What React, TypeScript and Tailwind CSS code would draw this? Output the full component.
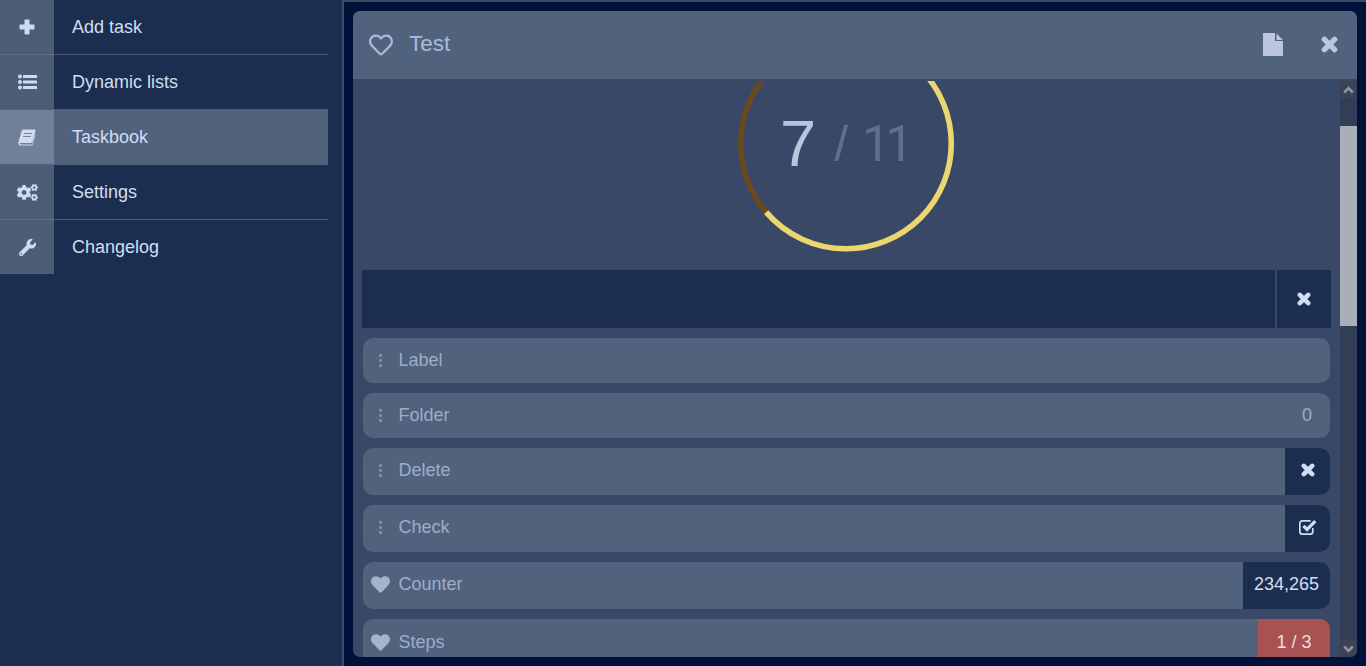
import { FaCogs, FaWrench, FaHeart, FaRegHeart } from "react-icons/fa";
import type { ReactNode } from "react";

function BookIcon() {
  return (
    <svg width="18" height="17" viewBox="0 0 18 17" fill="currentColor">
      <path fillRule="evenodd" d="M5.2 0.5H16.4C17.3 0.5 17.7 1.2 17.5 2L14.6 12.6C14.3 13.6 13.6 14 12.6 14H3C2.2 14 1.9 14.4 2 14.8C2.2 15.3 2.6 15.5 3.3 15.5H14.2L16.6 6.5L17.4 5.8L14.9 15.3C14.7 16.1 14 16.6 13.2 16.6H3C1.6 16.6 0.4 15.5 0.3 14.2C0.2 13.6 0.3 13.2 0.5 12.7L3.6 2C3.9 1 4.4 0.5 5.2 0.5ZM6.2 4L6 5H13.6L13.9 4ZM5.3 7L5 8H12.8L13.1 7Z" />
    </svg>
  );
}

function PlusIcon() {
  return (
    <svg width="16" height="16" viewBox="0 0 16 16" fill="currentColor">
      <rect x="5.5" y="0.5" width="5" height="15" rx="1" />
      <rect x="0.5" y="5.5" width="15" height="5" rx="1" />
    </svg>
  );
}

function ListIcon() {
  return (
    <svg width="19" height="16" viewBox="0 0 19 16" fill="currentColor">
      <circle cx="2" cy="2.5" r="2" />
      <circle cx="2" cy="8" r="2" />
      <circle cx="2" cy="13.5" r="2" />
      <rect x="5" y="1" width="14" height="3" rx="0.5" />
      <rect x="5" y="6.5" width="14" height="3" rx="0.5" />
      <rect x="5" y="12" width="14" height="3" rx="0.5" />
    </svg>
  );
}

function CrossIcon({ size }: { size: number }) {
  return (
    <svg width={size} height={size} viewBox="0 0 16 16" fill="none" stroke="currentColor" strokeWidth="5.2" strokeLinecap="round">
      <path d="M3.2 3.2L12.8 12.8M12.8 3.2L3.2 12.8" />
    </svg>
  );
}

function FileIcon() {
  return (
    <svg width="20" height="23" viewBox="0 0 20 23" fill="currentColor">
      <path d="M0 0H12V8H20V23H0Z" />
      <path d="M13.5 0.5L20 7H13.5Z" />
    </svg>
  );
}

function CheckIcon() {
  return (
    <svg width="18" height="16" viewBox="0 0 17 15" fill="none" stroke="currentColor">
      <path d="M13 8.5V12C13 13.2 12 14.2 10.8 14.2H3C1.8 14.2 0.8 13.2 0.8 12V4C0.8 2.8 1.8 1.8 3 1.8H11" strokeWidth="1.6" />
      <path d="M4.2 6.4L7.6 9.8L15.4 2" strokeWidth="3" />
    </svg>
  );
}

function Chevron({ down }: { down?: boolean }) {
  return (
    <svg width="11" height="8" viewBox="0 0 11 8" fill="none" stroke="currentColor" strokeWidth="2.6">
      <path d={down ? "M1.2 1.5L5.5 5.8L9.8 1.5" : "M1.2 6.5L5.5 2.2L9.8 6.5"} />
    </svg>
  );
}

function Grip() {
  return (
    <span className="mr-[0.5px] flex w-[35px] shrink-0 flex-col items-center gap-[2px]">
      <i className="block h-[3px] w-[3px] rounded-[1px] bg-[#7f8eaa]" />
      <i className="block h-[3px] w-[3px] rounded-[1px] bg-[#7f8eaa]" />
      <i className="block h-[3px] w-[3px] rounded-[1px] bg-[#7f8eaa]" />
    </span>
  );
}

function Heart() {
  return (
    <span className="mr-[0.5px] flex w-[35px] shrink-0 justify-center text-[19px] text-[#a5b3cd]">
      <FaHeart />
    </span>
  );
}

function Menu({ icon, label, active, border, h }: { icon: ReactNode; label: string; active?: boolean; border?: boolean; h: string }) {
  return (
    <div className={`flex w-[328px] ${h} ${active ? "bg-[#51627d] py-px" : ""}`}>
      <div className={`flex w-[54px] shrink-0 items-center justify-center text-[#cfdcf0] ${active ? "bg-[#717f99]" : "bg-[#4d5d78]"} ${border ? "border-b border-[#5d6c87]" : ""}`}>
        {icon}
      </div>
      <div className={`flex flex-1 items-center pl-[18px] text-[18px] text-[#d0ddf2] ${border ? "border-b border-[#4d5d78]" : ""}`}>
        {label}
      </div>
    </div>
  );
}

function Row({ h, icon, label, right, low }: { h: string; icon: ReactNode; label: string; right?: ReactNode; low?: boolean }) {
  return (
    <div className={`ml-[10px] mt-[10px] flex w-[967px] shrink-0 items-stretch overflow-hidden rounded-[10px] bg-[#51627d] text-[18px] text-[#9eadc8] ${h}`}>
      <div className={`flex flex-1 items-center ${low ? "" : "pb-[2px]"}`}>
        {icon}
        <span>{label}</span>
      </div>
      {right}
    </div>
  );
}

const r = 105.3;
const c = 2 * Math.PI * r;
const yellow = (c * 7) / 11;

export default function App() {
  return (
    <div className="flex h-[666px] w-[1366px] overflow-hidden bg-[#00123a] font-['Liberation_Sans',Arial,sans-serif]">
      <aside className="h-full w-[342px] shrink-0 bg-[#1c2e50]">
        <Menu h="h-[55px]" icon={<PlusIcon />} label="Add task" border />
        <Menu h="h-[54px]" icon={<ListIcon />} label="Dynamic lists" />
        <Menu h="h-[56px]" icon={<BookIcon />} label="Taskbook" active />
        <Menu h="h-[55px]" icon={<FaCogs size={21} />} label="Settings" border />
        <Menu h="h-[54px]" icon={<FaWrench size={17} />} label="Changelog" />
      </aside>
      <main className="flex-1 border-l-2 border-t-2 border-[#3b4b6b] p-[9px]">
        <div className="flex h-full w-[1004px] flex-col overflow-hidden rounded-[7px] bg-[#394867]">
          <header className="flex h-[68px] shrink-0 items-center bg-[#51627d] pb-[1px] pl-[16px] pr-[19px] text-[#a9b9d6]">
            <FaRegHeart size={24} />
            <span className="ml-[16px] flex-1 pb-[1px] text-[22.5px]">Test</span>
            <span className="mr-[38px] text-[#b9c6de]"><FileIcon /></span>
            <span className="text-[#b9c6de]"><CrossIcon size={17} /></span>
          </header>
          <div className="mt-[2px] flex min-h-0 flex-1">
            <div className="min-w-0 flex-1 overflow-hidden">
              <div className="relative h-[189px]">
                <svg className="absolute left-[383px] top-[-46px]" width="220" height="220" viewBox="0 0 220 220">
                  <circle cx="110" cy="108.5" r={r} fill="none" stroke="#694a1f" strokeWidth="5.6" />
                  <circle cx="110" cy="108.5" r={r} fill="none" stroke="#ecd672" strokeWidth="5.6" strokeDasharray={`${yellow} ${c}`} transform="rotate(-90 110 108.5)" />
                </svg>
                <div className="absolute left-[427px] top-[23px] flex h-[80px] items-center">
                  <span className="text-[65px] leading-[80px] text-[#b9c5dc]">7</span>
                  <span className="ml-[18px] text-[50px] leading-[80px] text-[#5f6f8c]">/</span>
                  <span className="ml-[14px] font-['Roboto',sans-serif] text-[50px] leading-[80px] tracking-[-5px] text-[#5f6f8c]">11</span>
                </div>
              </div>
              <div className="ml-[9px] flex h-[58px] w-[969px] bg-[#1c2e50]">
                <div className="flex-1" />
                <div className="flex w-[56px] items-center justify-center border-l-2 border-[#394867] text-[#d0ddf2]">
                  <CrossIcon size={14} />
                </div>
              </div>
              <Row h="h-[45px]" low icon={<Grip />} label="Label" />
              <Row
                h="h-[45px]"
                low
                icon={<Grip />}
                label="Folder"
                right={<div className="flex items-center pr-[18px]">0</div>}
              />
              <Row
                h="h-[47px]"
                icon={<Grip />}
                label="Delete"
                right={
                  <div className="flex w-[45px] items-center justify-center bg-[#1c2e50] pb-[3px] text-[#d0ddf2]">
                    <CrossIcon size={14} />
                  </div>
                }
              />
              <Row
                h="h-[47px]"
                icon={<Grip />}
                label="Check"
                right={
                  <div className="flex w-[45px] items-center justify-center bg-[#1c2e50] pb-[3px] text-[#d0ddf2]">
                    <CheckIcon />
                  </div>
                }
              />
              <Row
                h="h-[47px]"
                icon={<Heart />}
                label="Counter"
                right={
                  <div className="flex w-[87px] items-center justify-center bg-[#1c2e50] pb-[2px] text-[#d0ddf2]">234,265</div>
                }
              />
              <Row
                h="h-[47px]"
                low
                icon={<Heart />}
                label="Steps"
                right={
                  <div className="flex w-[72px] items-center justify-center bg-[#a85352] text-[#ecdfe0]">1 / 3</div>
                }
              />
            </div>
            <div className="flex w-[17px] shrink-0 flex-col bg-[#333d57]">
              <div className="flex h-[17px] items-center justify-center bg-[#3c4257] text-[#8d93a3]"><Chevron /></div>
              <div className="mt-[28px] h-[200px] bg-[#a9aeb9]" />
              <div className="flex-1" />
              <div className="flex h-[17px] items-center justify-center bg-[#3c4257] text-[#8d93a3]"><Chevron down /></div>
            </div>
          </div>
        </div>
      </main>
    </div>
  );
}
